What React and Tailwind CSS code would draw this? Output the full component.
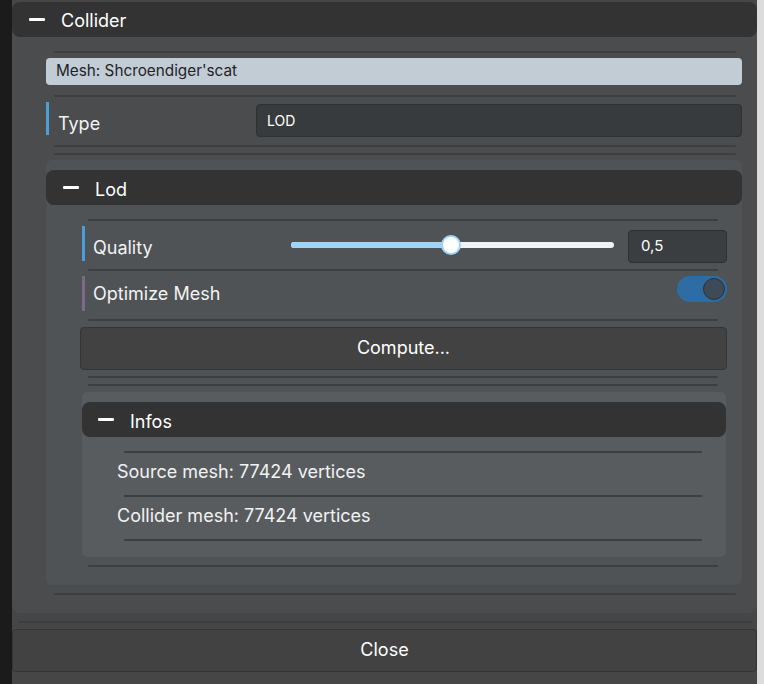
import React from "react";

// Thin inset separator used between property rows
function Divider({ className = "" }) {
    return <div className={`h-[2px] bg-[#3d3e41] rounded-full ${className}`} />;
}

function Minus() {
    return <span className="block w-[16px] h-[3px] bg-white rounded-[1px]" />;
}

function SectionHeader({ title, padLeft }) {
    return (
        <div className={`flex items-center h-[35px] bg-[#333333] rounded-lg ${padLeft}`}>
            <Minus />
            <span className="ml-[16px] pt-[3px] text-[18px] text-white">{title}</span>
        </div>
    );
}

function Row({ bar, label, labelPad, children, className = "" }) {
    return (
        <div className={`flex items-start ${className}`}>
            <div className={`w-[3px] h-[35px] shrink-0 ${bar}`} />
            <span className={`self-center ml-[8px] text-[18px] text-[#f2f2f2] ${labelPad}`}>{label}</span>
            <div className="flex-1 flex justify-end items-start">{children}</div>
        </div>
    );
}

export default function App() {
    return (
        <div
            className="flex w-[764px] h-[684px] bg-[#464646] overflow-hidden"
            style={{ fontFamily: "Inter, Roboto, 'Noto Sans', sans-serif" }}
        >
            <div className="w-[12px] shrink-0 bg-[#1b1b1b]" />

            <div className="flex-1 flex flex-col pt-[2px]">
                {/* Collider */}
                <div className="h-[611px] bg-[#4b4c4e] rounded-lg flex flex-col">
                    <div className="flex items-center h-[35px] bg-[#333333] rounded-lg pl-[17px]">
                        <Minus />
                        <span className="ml-[16px] pt-[2px] text-[18px] text-white">Collider</span>
                    </div>

                    <div className="flex flex-col pl-[34px] pr-[15px]">
                        <Divider className="mt-[14px] ml-[8px] mr-[6px]" />
                        <div className="mt-[5px] h-[27px] rounded bg-[#c2ccd5] flex items-center px-[10px] text-[15.3px] text-[#1f2328]">
                            Mesh: Shcroendiger'scat
                        </div>
                        <Divider className="mt-[10px] ml-[8px] mr-[6px]" />

                        <div className="mt-[5px] flex items-start h-[35px]">
                            <div className="w-[3px] h-[33px] bg-[#4a9fd8]" />
                            <span className="self-center ml-[9px] pt-[7px] text-[18px] text-[#f2f2f2]">Type</span>
                            <div className="ml-auto mt-[2px] w-[486px] h-[33px] rounded bg-[#383b3d] border border-[#2e3032] flex items-center px-[10px] text-[14px] text-white">
                                LOD
                            </div>
                        </div>

                        <Divider className="mt-[8px] ml-[8px] mr-[6px]" />
                        <Divider className="mt-[6px] ml-[8px] mr-[6px]" />

                        {/* Lod */}
                        <div className="mt-[5px] h-[425px] bg-[#4f5356] rounded-md pt-[10px] flex flex-col">
                            <SectionHeader title="Lod" padLeft="pl-[17px]" />

                            <div className="flex flex-col pl-[34px] pr-[15px]">
                                <Divider className="mt-[14px] ml-[8px] mr-[9px]" />

                                <Row bar="bg-[#4a9fd8]" label="Quality" labelPad="pt-[5px]" className="mt-[5px] ml-[2px] h-[37px]">
                                    <div className="self-center relative w-[323px] h-[6px] rounded-full bg-[#f2f2f2] mr-[14px]">
                                        <div className="absolute left-0 top-0 h-full w-[160px] rounded-full bg-[#9fd3f7]" />
                                        <div className="absolute left-[150px] top-[-7px] w-[20px] h-[20px] rounded-full bg-white border-2 border-[#9fd3f7]" />
                                    </div>
                                    <div className="mt-[4px] w-[99px] h-[33px] rounded bg-[#3b3e40] border border-[#2e3032] flex items-center px-[12px] text-[15px] text-white">
                                        0,5
                                    </div>
                                </Row>

                                <Divider className="mt-[6px] ml-[8px] mr-[9px]" />

                                <Row bar="bg-[#7d6a88]" label="Optimize Mesh" labelPad="pt-0" className="mt-[5px] ml-[2px] h-[35px]">
                                    <div className="self-center w-[50px] h-[26px] rounded-full bg-[#2e6da4] flex items-center justify-end pr-[2px]">
                                        <div className="w-[22px] h-[22px] rounded-full bg-[#3e4a58] border border-[#29323d]" />
                                    </div>
                                </Row>

                                <Divider className="mt-[8px] ml-[8px] mr-[9px]" />

                                <button className="mt-[6px] h-[43px] rounded bg-[#424242] border border-[#353535] text-[18px] text-white pb-[3px]">
                                    Compute...
                                </button>

                                <Divider className="mt-[6px] ml-[8px] mr-[9px]" />
                                <Divider className="mt-[6px] ml-[8px] mr-[9px]" />

                                {/* Infos */}
                                <div className="mt-[6px] ml-[2px] mr-px h-[165px] bg-[#585c5f] rounded-md pt-[10px] flex flex-col">
                                    <SectionHeader title="Infos" padLeft="pl-[16px]" />
                                    <div className="flex flex-col pl-[35px] pr-[24px]">
                                        <Divider className="mt-[14px] ml-[7px]" />
                                        <div className="h-[42px] flex items-center pb-[5px] text-[18px] text-[#f2f2f2]">
                                            Source mesh: 77424 vertices
                                        </div>
                                        <Divider className="ml-[7px]" />
                                        <div className="h-[42px] flex items-center pb-[5px] text-[18px] text-[#f2f2f2]">
                                            Collider mesh: 77424 vertices
                                        </div>
                                        <Divider className="ml-[7px]" />
                                    </div>
                                </div>

                                <Divider className="mt-[8px] ml-[8px] mr-[9px]" />
                            </div>
                        </div>

                        <Divider className="mt-[8px] ml-[8px] mr-[6px]" />
                    </div>
                </div>

                <Divider className="mt-[8px] ml-[6px] mr-[5px]" />
                <button className="mt-[6px] h-[43px] rounded bg-[#424242] border border-[#353535] text-[18px] text-white pb-[2px]">
                    Close
                </button>
            </div>

            <div className="w-[7px] shrink-0 bg-[#dcdcdc]" />
        </div>
    );
}
